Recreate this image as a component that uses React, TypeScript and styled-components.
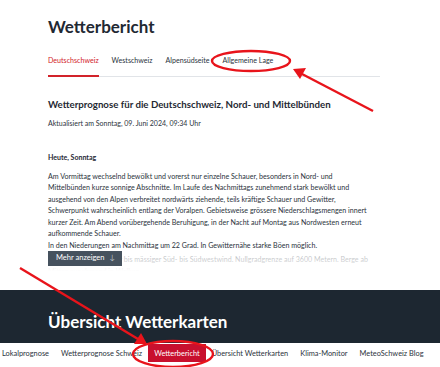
import React from 'react';
import styled, { createGlobalStyle } from 'styled-components';

const GlobalStyle = createGlobalStyle`
  html, body {
    margin: 0;
    padding: 0;
    background: #ffffff;
  }
  body {
    font-family: Lato, 'Noto Sans', sans-serif;
    color: #1f2933;
  }
`;

const Page = styled.div`
  position: relative;
  width: 440px;
  height: 367px;
  overflow: hidden;
  display: flex;
  flex-direction: column;
`;

const Main = styled.div`
  flex: 1;
  min-height: 0;
  padding: 0 60px 0 48px;
  display: flex;
  flex-direction: column;
`;

const Title = styled.h1`
  margin: 16px 0 0 0;
  font-size: 17px;
  line-height: 22px;
  font-weight: 700;
  color: #1f2933;
`;

const Tabs = styled.div`
  display: flex;
  gap: 13px;
  margin-top: 18px;
  border-bottom: 1px solid #e1e4e8;
`;

const Tab = styled.div<{ $active?: boolean }>`
  font-size: 7.1px;
  line-height: 9px;
  padding-bottom: 10px;
  color: ${(p) => (p.$active ? '#d2232a' : '#2b333c')};
  border-bottom: 2px solid ${(p) => (p.$active ? '#d2232a' : 'transparent')};
  margin-bottom: -1px;
`;

const Heading = styled.h2`
  margin: 20px 0 0 0;
  font-size: 9.7px;
  line-height: 14px;
  font-weight: 700;
  white-space: nowrap;
  color: #1f2933;
`;

const Updated = styled.div`
  margin-top: 7px;
  font-size: 7px;
  line-height: 10px;
  color: #2b333c;
`;

const Subhead = styled.div`
  margin-top: 24px;
  font-size: 7px;
  line-height: 10px;
  font-weight: 700;
  color: #1f2933;
`;

const Text = styled.p<{ $gap?: number }>`
  margin: ${(p) => p.$gap ?? 8.5}px 0 0 0;
  font-size: 7.1px;
  line-height: 11.5px;
  color: #2b333c;
  white-space: nowrap;
`;

const Line = styled.span`
  display: block;
`;

const Collapsed = styled.div`
  position: relative;
  flex: 1;
  min-height: 0;
  overflow: hidden;
`;

const Fade = styled.div`
  position: absolute;
  inset: 0;
  background: linear-gradient(to bottom, rgba(255, 255, 255, 0.62) 0px, rgba(255, 255, 255, 0.8) 12px, #ffffff 20px);
`;

const MoreButton = styled.button`
  position: absolute;
  left: 0;
  top: -2px;
  height: 17px;
  padding: 0 7px 0 8px;
  border: none;
  background: #46525e;
  color: #ffffff;
  font-family: inherit;
  font-size: 7.5px;
  display: flex;
  align-items: center;
  gap: 5px;
`;

const ArrowGlyph = styled.span`
  color: #b9c0c7;
`;

const Band = styled.div`
  height: 53px;
  flex-shrink: 0;
  background: #1d2731;
  display: flex;
  align-items: flex-end;
  padding: 0 0 11px 48px;
  box-sizing: border-box;
`;

const BandTitle = styled.div`
  color: #ffffff;
  font-size: 17px;
  line-height: 20px;
  font-weight: 700;
`;

const Nav = styled.div`
  height: 24px;
  flex-shrink: 0;
  display: flex;
  align-items: flex-start;
  margin-left: -4px;
  white-space: nowrap;
`;

const NavItem = styled.div<{ $active?: boolean }>`
  height: 18px;
  margin-top: 1px;
  display: flex;
  align-items: center;
  padding: 0 6px;
  font-size: 7.4px;
  color: ${(p) => (p.$active ? '#ffffff' : '#2b333c')};
  background: ${(p) => (p.$active ? '#c8102e' : 'transparent')};
`;

const Marks = styled.svg`
  position: absolute;
  left: 0;
  top: 0;
  pointer-events: none;
`;

const forecast = [
  'Am Vormittag wechselnd bewölkt und vorerst nur einzelne Schauer, besonders in Nord- und',
  'Mittelbünden kurze sonnige Abschnitte. Im Laufe des Nachmittags zunehmend stark bewölkt und',
  'ausgehend von den Alpen verbreitet nordwärts ziehende, teils kräftige Schauer und Gewitter,',
  'Schwerpunkt wahrscheinlich entlang der Voralpen. Gebietsweise grössere Niederschlagsmengen innert',
  'kurzer Zeit. Am Abend vorübergehende Beruhigung, in der Nacht auf Montag aus Nordwesten erneut',
  'aufkommende Schauer.',
];

const navItems = [
  'Lokalprognose',
  'Wetterprognose Schweiz',
  'Wetterbericht',
  'Übersicht Wetterkarten',
  'Klima-Monitor',
  'MeteoSchweiz Blog',
];

const App: React.FC = () => {
  return (
    <Page>
      <GlobalStyle />
      <Main>
        <Title>Wetterbericht</Title>
        <Tabs>
          <Tab $active>Deutschschweiz</Tab>
          <Tab>Westschweiz</Tab>
          <Tab>Alpensüdseite</Tab>
          <Tab>Allgemeine Lage</Tab>
        </Tabs>
        <Heading>Wetterprognose für die Deutschschweiz, Nord- und Mittelbünden</Heading>
        <Updated>Aktualisiert am Sonntag, 09. Juni 2024, 09:34 Uhr</Updated>
        <Subhead>Heute, Sonntag</Subhead>
        <Text>
          {forecast.map((line) => (
            <Line key={line}>{line}</Line>
          ))}
        </Text>
        <Text $gap={0}>In den Niederungen am Nachmittag um 22 Grad. In Gewitternähe starke Böen möglich.</Text>
        <Collapsed>
          <Text $gap={3}>
            <Line>In den Alpen schwacher bis mässiger Süd- bis Südwestwind. Nullgradgrenze auf 3600 Metern. Berge ab</Line>
            <Line>Mittag zunehmend in Wolken.</Line>
          </Text>
          <Fade />
          <MoreButton>
            Mehr anzeigen <ArrowGlyph>↓</ArrowGlyph>
          </MoreButton>
        </Collapsed>
      </Main>
      <Band>
        <BandTitle>Übersicht Wetterkarten</BandTitle>
      </Band>
      <Nav>
        {navItems.map((item) => (
          <NavItem key={item} $active={item === 'Wetterbericht'}>
            {item}
          </NavItem>
        ))}
      </Nav>
      <Marks width="440" height="367" viewBox="0 0 440 367">
        <g fill="none" stroke="#e8141b" strokeWidth="2.4">
          <ellipse cx="251" cy="61" rx="39" ry="10" />
          <ellipse cx="173" cy="354" rx="40" ry="13" />
          <line x1="373" y1="111" x2="302" y2="74" />
          <line x1="20" y1="268" x2="138" y2="339" />
        </g>
        <g fill="#e8141b">
          <polygon points="293,69 306,68 300,79" />
          <polygon points="147,344 134,344 141,333" />
        </g>
      </Marks>
    </Page>
  );
};

export default App;
